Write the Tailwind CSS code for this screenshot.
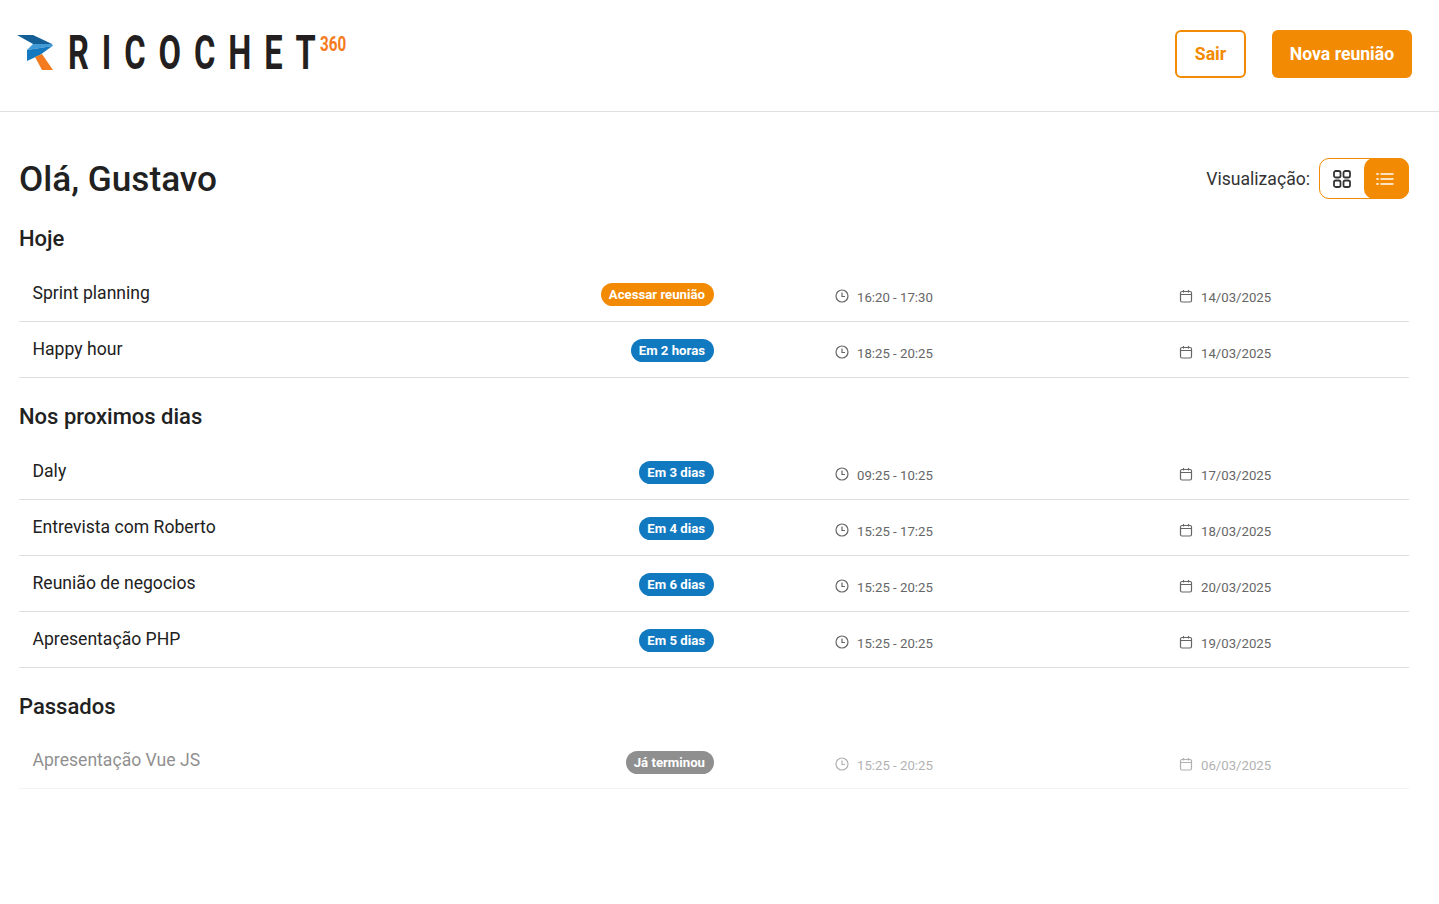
<!DOCTYPE html>
<html lang="pt-BR">
<head>
  <meta charset="UTF-8">
  <meta name="viewport" content="width=device-width, initial-scale=1.0">
  <title>Ricochet 360</title>
  <script src="https://cdn.jsdelivr.net/npm/@tailwindcss/browser@4"></script>
</head>
<body class="min-h-screen bg-white text-[#212121] font-['Roboto',sans-serif]">
  <!-- Header -->
  <header class="h-[112px] border-b border-[#e0e0e0] flex items-start justify-between pl-[16px] pr-[27px]">
    <div class="flex items-start pt-[35px]">
      <svg class="w-[38px] h-[36px] shrink-0" viewBox="0 0 38 36">
        <path d="M1 0H17L36 9H17Z" fill="#145f96"/>
        <path d="M17 9H36L37 11L11 15L17 9Z" fill="#3f9ad6"/>
        <path d="M36.500 11L11 15V26L24 20Z" fill="#1579bf"/>
        <path d="M19 22L26 19L37 35H26Z" fill="#f47b20"/>
      </svg>
      <div class="relative w-[292px] h-[36px] ml-[15px]">
        <span class="absolute left-[-1px] top-[-10px] origin-left scale-x-[.68] text-[48px] leading-[56px] font-bold tracking-[19px] whitespace-nowrap text-[#231f20]">RICOCHE<span class="tracking-normal">T</span></span>
        <span class="absolute left-[250.500px] top-[-3.500px] origin-left scale-x-[.76] text-[20px] leading-[24px] font-bold text-[#f47b20]">360</span>
      </div>
    </div>
    <div class="flex items-center gap-[26px] pt-[30px]">
      <button class="w-[71px] h-[48px] rounded-md border-2 border-[#f38a03] text-[#f38a03] text-[17.600px] font-bold">Sair</button>
      <button class="w-[140px] h-[48px] rounded-md bg-[#f38a03] text-white text-[17.600px] font-bold">Nova reunião</button>
    </div>
  </header>

  <main class="pl-[19px] pr-[30px]">
    <div class="flex items-start justify-between pt-[45px] h-[105px]">
      <h1 class="text-[35.200px] leading-[44px] font-medium">Olá, Gustavo</h1>
      <div class="flex items-center gap-[9px] mt-[1px]">
        <span class="text-[17.600px] text-[#333] pt-[2px]">Visualização:</span>
        <div class="flex w-[90px] h-[41px] rounded-[10px] border border-[#f38a03]">
          <button class="w-[44px] flex items-center justify-center">
            <svg class="w-[18px] h-[18px] mt-[1px]" viewBox="0 0 18 18" fill="none" stroke="#333" stroke-width="1.800"><rect x="1" y="1" width="6.500" height="6.500" rx="1.800"/><rect x="10.500" y="1" width="6.500" height="6.500" rx="1.800"/><rect x="1" y="10.500" width="6.500" height="6.500" rx="1.800"/><rect x="10.500" y="10.500" width="6.500" height="6.500" rx="1.800"/></svg>
          </button>
          <button class="w-[46px] -my-px -mr-px rounded-[10px] bg-[#f38a03] flex items-center justify-center">
            <svg class="w-[18px] h-[14px] -ml-[2px]" viewBox="0 0 18 14" fill="none" stroke="#fff" stroke-width="1.500" stroke-linecap="round"><path d="M5 2H17M5 7H17M5 12H17M0.800 2H2.200M0.800 7H2.200M0.800 12H2.200"/></svg>
          </button>
        </div>
      </div>
    </div>

    <h2 class="text-[22px] leading-[26px] font-medium mt-[9px]">Hoje</h2>
    <ul class="mt-[14px]">
      <li class="grid grid-cols-[695px_344px_1fr] h-[56px] border-b border-[#dedede]">
        <div class="flex justify-between pl-[13.500px] pt-[16px]"><span class="text-[17.600px] leading-[22px]">Sprint planning</span><span class="h-[23px] mt-[1px] pl-[8px] pr-[9px] rounded-full bg-[#f38a03] text-white text-[13.200px] leading-[23px] font-bold">Acessar reunião</span></div>
        <div class="flex items-center gap-[8px] pl-[121px] pt-[9px] text-[13.200px] text-[#666]"><svg class="w-[14px] h-[14px] -mt-[4px]" viewBox="0 0 14 14" fill="none" stroke="#666" stroke-width="1.200"><circle cx="7" cy="7" r="6"/><path d="M7 3.500V7.500H10"/></svg>16:20 - 17:30</div>
        <div class="flex items-center gap-[8px] pl-[121px] pt-[9px] text-[13.200px] text-[#666]"><svg class="w-[14px] h-[14px] -mt-[4px]" viewBox="0 0 14 14" fill="none" stroke="#666" stroke-width="1.200"><rect x="1.500" y="2.500" width="11" height="10.500" rx="1.500"/><path d="M1.500 5.500H12.500M4.500 1V3.500M9.500 1V3.500"/></svg>14/03/2025</div>
      </li>
      <li class="grid grid-cols-[695px_344px_1fr] h-[56px] border-b border-[#dedede]">
        <div class="flex justify-between pl-[13.500px] pt-[16px]"><span class="text-[17.600px] leading-[22px]">Happy hour</span><span class="h-[23px] mt-[1px] pl-[8px] pr-[9px] rounded-full bg-[#1179bf] text-white text-[13.200px] leading-[23px] font-bold">Em 2 horas</span></div>
        <div class="flex items-center gap-[8px] pl-[121px] pt-[9px] text-[13.200px] text-[#666]"><svg class="w-[14px] h-[14px] -mt-[4px]" viewBox="0 0 14 14" fill="none" stroke="#666" stroke-width="1.200"><circle cx="7" cy="7" r="6"/><path d="M7 3.500V7.500H10"/></svg>18:25 - 20:25</div>
        <div class="flex items-center gap-[8px] pl-[121px] pt-[9px] text-[13.200px] text-[#666]"><svg class="w-[14px] h-[14px] -mt-[4px]" viewBox="0 0 14 14" fill="none" stroke="#666" stroke-width="1.200"><rect x="1.500" y="2.500" width="11" height="10.500" rx="1.500"/><path d="M1.500 5.500H12.500M4.500 1V3.500M9.500 1V3.500"/></svg>14/03/2025</div>
      </li>
    </ul>

    <h2 class="text-[22px] leading-[26px] font-medium mt-[26px]">Nos proximos dias</h2>
    <ul class="mt-[14px]">
      <li class="grid grid-cols-[695px_344px_1fr] h-[56px] border-b border-[#dedede]">
        <div class="flex justify-between pl-[13.500px] pt-[16px]"><span class="text-[17.600px] leading-[22px]">Daly</span><span class="h-[23px] mt-[1px] pl-[8px] pr-[9px] rounded-full bg-[#1179bf] text-white text-[13.200px] leading-[23px] font-bold">Em 3 dias</span></div>
        <div class="flex items-center gap-[8px] pl-[121px] pt-[9px] text-[13.200px] text-[#666]"><svg class="w-[14px] h-[14px] -mt-[4px]" viewBox="0 0 14 14" fill="none" stroke="#666" stroke-width="1.200"><circle cx="7" cy="7" r="6"/><path d="M7 3.500V7.500H10"/></svg>09:25 - 10:25</div>
        <div class="flex items-center gap-[8px] pl-[121px] pt-[9px] text-[13.200px] text-[#666]"><svg class="w-[14px] h-[14px] -mt-[4px]" viewBox="0 0 14 14" fill="none" stroke="#666" stroke-width="1.200"><rect x="1.500" y="2.500" width="11" height="10.500" rx="1.500"/><path d="M1.500 5.500H12.500M4.500 1V3.500M9.500 1V3.500"/></svg>17/03/2025</div>
      </li>
      <li class="grid grid-cols-[695px_344px_1fr] h-[56px] border-b border-[#dedede]">
        <div class="flex justify-between pl-[13.500px] pt-[16px]"><span class="text-[17.600px] leading-[22px]">Entrevista com Roberto</span><span class="h-[23px] mt-[1px] pl-[8px] pr-[9px] rounded-full bg-[#1179bf] text-white text-[13.200px] leading-[23px] font-bold">Em 4 dias</span></div>
        <div class="flex items-center gap-[8px] pl-[121px] pt-[9px] text-[13.200px] text-[#666]"><svg class="w-[14px] h-[14px] -mt-[4px]" viewBox="0 0 14 14" fill="none" stroke="#666" stroke-width="1.200"><circle cx="7" cy="7" r="6"/><path d="M7 3.500V7.500H10"/></svg>15:25 - 17:25</div>
        <div class="flex items-center gap-[8px] pl-[121px] pt-[9px] text-[13.200px] text-[#666]"><svg class="w-[14px] h-[14px] -mt-[4px]" viewBox="0 0 14 14" fill="none" stroke="#666" stroke-width="1.200"><rect x="1.500" y="2.500" width="11" height="10.500" rx="1.500"/><path d="M1.500 5.500H12.500M4.500 1V3.500M9.500 1V3.500"/></svg>18/03/2025</div>
      </li>
      <li class="grid grid-cols-[695px_344px_1fr] h-[56px] border-b border-[#dedede]">
        <div class="flex justify-between pl-[13.500px] pt-[16px]"><span class="text-[17.600px] leading-[22px]">Reunião de negocios</span><span class="h-[23px] mt-[1px] pl-[8px] pr-[9px] rounded-full bg-[#1179bf] text-white text-[13.200px] leading-[23px] font-bold">Em 6 dias</span></div>
        <div class="flex items-center gap-[8px] pl-[121px] pt-[9px] text-[13.200px] text-[#666]"><svg class="w-[14px] h-[14px] -mt-[4px]" viewBox="0 0 14 14" fill="none" stroke="#666" stroke-width="1.200"><circle cx="7" cy="7" r="6"/><path d="M7 3.500V7.500H10"/></svg>15:25 - 20:25</div>
        <div class="flex items-center gap-[8px] pl-[121px] pt-[9px] text-[13.200px] text-[#666]"><svg class="w-[14px] h-[14px] -mt-[4px]" viewBox="0 0 14 14" fill="none" stroke="#666" stroke-width="1.200"><rect x="1.500" y="2.500" width="11" height="10.500" rx="1.500"/><path d="M1.500 5.500H12.500M4.500 1V3.500M9.500 1V3.500"/></svg>20/03/2025</div>
      </li>
      <li class="grid grid-cols-[695px_344px_1fr] h-[56px] border-b border-[#dedede]">
        <div class="flex justify-between pl-[13.500px] pt-[16px]"><span class="text-[17.600px] leading-[22px]">Apresentação PHP</span><span class="h-[23px] mt-[1px] pl-[8px] pr-[9px] rounded-full bg-[#1179bf] text-white text-[13.200px] leading-[23px] font-bold">Em 5 dias</span></div>
        <div class="flex items-center gap-[8px] pl-[121px] pt-[9px] text-[13.200px] text-[#666]"><svg class="w-[14px] h-[14px] -mt-[4px]" viewBox="0 0 14 14" fill="none" stroke="#666" stroke-width="1.200"><circle cx="7" cy="7" r="6"/><path d="M7 3.500V7.500H10"/></svg>15:25 - 20:25</div>
        <div class="flex items-center gap-[8px] pl-[121px] pt-[9px] text-[13.200px] text-[#666]"><svg class="w-[14px] h-[14px] -mt-[4px]" viewBox="0 0 14 14" fill="none" stroke="#666" stroke-width="1.200"><rect x="1.500" y="2.500" width="11" height="10.500" rx="1.500"/><path d="M1.500 5.500H12.500M4.500 1V3.500M9.500 1V3.500"/></svg>19/03/2025</div>
      </li>
    </ul>

    <h2 class="text-[22px] leading-[26px] font-medium mt-[26px]">Passados</h2>
    <ul class="mt-[13px]">
      <li class="grid grid-cols-[695px_344px_1fr] h-[56px] border-b border-[#dedede]/70 opacity-50">
        <div class="flex justify-between pl-[13.500px] pt-[16px]"><span class="text-[17.600px] leading-[22px]">Apresentação Vue JS</span><span class="h-[23px] mt-[2px] pl-[8px] pr-[9px] rounded-full bg-[#212121] text-white text-[13.200px] leading-[23px] font-bold">Já terminou</span></div>
        <div class="flex items-center gap-[8px] pl-[121px] pt-[11px] text-[13.200px] text-[#666]"><svg class="w-[14px] h-[14px] -mt-[4px]" viewBox="0 0 14 14" fill="none" stroke="#666" stroke-width="1.200"><circle cx="7" cy="7" r="6"/><path d="M7 3.500V7.500H10"/></svg>15:25 - 20:25</div>
        <div class="flex items-center gap-[8px] pl-[121px] pt-[11px] text-[13.200px] text-[#666]"><svg class="w-[14px] h-[14px] -mt-[4px]" viewBox="0 0 14 14" fill="none" stroke="#666" stroke-width="1.200"><rect x="1.500" y="2.500" width="11" height="10.500" rx="1.500"/><path d="M1.500 5.500H12.500M4.500 1V3.500M9.500 1V3.500"/></svg>06/03/2025</div>
      </li>
    </ul>
  </main>
</body>
</html>
